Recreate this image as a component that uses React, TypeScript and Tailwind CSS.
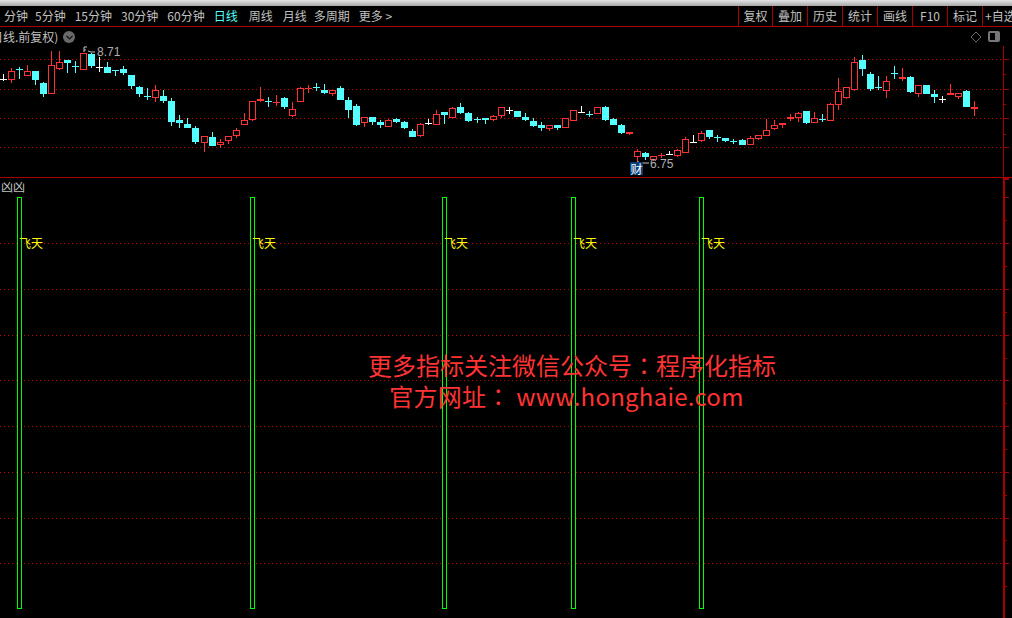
import { ChevronDown } from "lucide-react";

type Candle = [number, number, number, number, "r" | "c" | "w"];

// high, body top, body bottom, low, colour (by index, pixel y on the page)
const candles: Candle[] = [
  [75, 80, 80, 82, "w"], [69, 72, 81, 84, "r"], [68, 70, 70, 80, "c"], [66, 72, 77, 77, "r"],
  [72, 72, 81, 86, "c"], [83, 84, 95, 98, "c"], [52, 66, 95, 95, "r"], [52, 63, 70, 71, "r"],
  [61, 61, 64, 74, "c"], [62, 67, 67, 74, "c"], [54, 54, 71, 71, "r"], [54, 55, 67, 69, "c"],
  [58, 68, 68, 73, "w"], [63, 68, 74, 74, "c"], [71, 71, 71, 77, "c"], [67, 70, 74, 76, "c"],
  [76, 76, 87, 90, "c"], [87, 88, 95, 98, "c"], [89, 97, 97, 101, "c"], [86, 91, 99, 103, "r"],
  [91, 97, 102, 104, "c"], [99, 102, 123, 127, "c"], [116, 121, 124, 129, "c"], [119, 125, 129, 129, "c"],
  [127, 129, 143, 145, "c"], [137, 137, 144, 153, "r"], [133, 138, 147, 147, "c"], [140, 143, 146, 149, "r"],
  [137, 137, 142, 145, "r"], [129, 131, 137, 139, "r"], [114, 121, 126, 126, "r"], [102, 102, 121, 122, "r"],
  [88, 100, 102, 103, "r"], [98, 102, 102, 108, "c"], [96, 103, 103, 107, "r"], [98, 99, 108, 110, "c"],
  [103, 110, 117, 118, "r"], [88, 89, 103, 103, "r"], [86, 89, 89, 94, "r"], [84, 88, 88, 92, "c"],
  [85, 91, 94, 95, "c"], [91, 91, 95, 97, "r"], [87, 89, 101, 101, "c"], [98, 101, 111, 119, "c"],
  [105, 107, 126, 127, "c"], [118, 118, 124, 128, "r"], [118, 118, 123, 126, "c"], [121, 123, 126, 129, "c"],
  [120, 121, 128, 128, "r"], [119, 120, 123, 124, "c"], [122, 123, 129, 130, "c"], [130, 132, 138, 138, "c"],
  [124, 125, 137, 138, "r"], [120, 124, 124, 126, "w"], [111, 115, 126, 126, "r"], [113, 113, 116, 125, "c"],
  [108, 109, 119, 119, "r"], [104, 108, 114, 115, "c"], [113, 114, 122, 123, "c"], [118, 120, 121, 124, "c"],
  [119, 119, 121, 125, "c"], [116, 117, 121, 122, "r"], [108, 108, 117, 119, "r"], [108, 111, 111, 115, "w"],
  [112, 112, 118, 118, "c"], [114, 118, 121, 122, "c"], [119, 122, 127, 128, "c"], [123, 126, 129, 132, "c"],
  [126, 126, 130, 132, "r"], [126, 126, 129, 131, "c"], [119, 119, 129, 129, "r"], [111, 111, 122, 122, "r"],
  [107, 113, 113, 113, "w"], [112, 115, 115, 118, "c"], [108, 108, 115, 115, "r"], [107, 108, 121, 122, "c"],
  [119, 120, 126, 126, "c"], [125, 126, 134, 135, "c"], [133, 133, 135, 136, "r"], [150, 152, 158, 163, "r"],
  [153, 154, 158, 161, "c"], [157, 157, 161, 162, "r"], [154, 156, 156, 159, "r"], [152, 155, 155, 155, "w"],
  [150, 151, 157, 158, "r"], [138, 140, 154, 154, "r"], [136, 143, 143, 143, "w"], [132, 134, 142, 143, "r"],
  [131, 131, 138, 140, "c"], [136, 138, 138, 143, "c"], [139, 139, 142, 143, "c"], [140, 142, 142, 145, "c"],
  [140, 141, 146, 146, "c"], [137, 139, 146, 146, "r"], [136, 136, 140, 141, "r"], [120, 131, 137, 137, "r"],
  [121, 126, 130, 131, "r"], [124, 124, 126, 129, "r"], [115, 118, 120, 122, "r"], [113, 114, 119, 123, "r"],
  [112, 112, 124, 125, "c"], [113, 119, 124, 124, "r"], [115, 120, 120, 123, "c"], [104, 105, 122, 122, "r"],
  [79, 92, 106, 111, "r"], [88, 88, 99, 100, "r"], [58, 63, 91, 92, "r"], [56, 61, 70, 77, "c"],
  [73, 75, 90, 92, "c"], [77, 88, 88, 91, "c"], [77, 82, 92, 99, "r"], [67, 74, 74, 80, "c"],
  [69, 78, 80, 82, "r"], [77, 78, 93, 94, "c"], [86, 86, 95, 98, "r"], [86, 86, 95, 95, "c"],
  [91, 95, 98, 104, "c"], [97, 100, 100, 104, "w"], [85, 94, 96, 96, "r"], [94, 94, 98, 100, "r"],
  [91, 92, 108, 108, "c"], [102, 108, 110, 117, "r"],
];

// the terminal's bar spacing slips one pixel in three places
const candleX = (i: number) => {
  if (i < 25) return 3 + 8 * i;
  if (i < 59) return 204 + 8 * (i - 25);
  if (i < 92) return 477 + 8 * (i - 59);
  return 742 + 8 * (i - 92);
};

const colors = { r: "#ff3232", c: "#54ffff", w: "#ffffff" };

const rightTabs = ["叠加", "历史", "统计", "画线", "F10", "标记"];

const upperGrid = [60, 90, 119, 148];
const upperMinor = [75, 105, 135];
const lowerGrid = [243, 289, 335, 380, 426, 472, 518, 563];
const lowerMinor = [220, 266, 312, 358, 403, 449, 495, 540, 586];

const signals = [17, 250, 442, 571, 699];

function CandleChart() {
  return (
    <svg width="1012" height="150" viewBox="0 28 1012 150" shapeRendering="crispEdges" className="block">
      {upperGrid.map((y) => (
        <line key={y} x1="0" x2="1003" y1={y + 0.5} y2={y + 0.5} stroke="#c80000" strokeDasharray="1 3" />
      ))}
      <rect x="1003" y="47" width="1" height="131" fill="#a80000" />
      {upperGrid.map((y) => (
        <rect key={y} x="1004" y={y} width="5" height="1" fill="#a80000" />
      ))}
      {upperMinor.map((y) => (
        <rect key={y} x="1004" y={y} width="2" height="1" fill="#a80000" />
      ))}
      {candles.map(([high, top, bottom, low, c], i) => {
        const x = candleX(i);
        const color = colors[c];
        const flat = bottom - top <= 2;
        return (
          <g key={i}>
            <rect x={x} y={high} width="1" height={Math.max(low - high, 1)} fill={color} />
            {flat ? (
              <rect x={x - 3} y={top} width="7" height={Math.max(bottom - top, 1)} fill={color} />
            ) : c === "r" ? (
              <rect x={x - 3 + 0.5} y={top + 0.5} width="6" height={bottom - top - 1} fill="#000" stroke={color} />
            ) : (
              <rect x={x - 3} y={top} width="7" height={bottom - top} fill={color} />
            )}
          </g>
        );
      })}
      <path d="M84 48v5M84 48h3M84 51h2M88 52l3 1h4" stroke="#c0c0c0" fill="none" shapeRendering="auto" />
      <path d="M637 163h2M638 163v4M640 164h9" stroke="#c0c0c0" fill="none" shapeRendering="auto" />
    </svg>
  );
}

function SignalChart() {
  return (
    <svg width="1012" height="440" viewBox="0 178 1012 440" shapeRendering="crispEdges" className="block">
      {lowerGrid.map((y) => (
        <line key={y} x1="0" x2="1003" y1={y + 0.5} y2={y + 0.5} stroke="#c80000" strokeDasharray="1 3" />
      ))}
      <rect x="1003" y="178" width="2" height="440" fill="#a80000" />
      <rect x="1005" y="178" width="4" height="2" fill="#a80000" />
      {[197, ...lowerGrid].map((y) => (
        <rect key={y} x="1005" y={y} width="4" height="1" fill="#a80000" />
      ))}
      {lowerMinor.map((y) => (
        <rect key={y} x="1005" y={y} width="2" height="1" fill="#a80000" />
      ))}
      {signals.map((x) => (
        <rect key={x} x={x + 0.5} y="197.5" width="4" height="411" fill="#000" stroke="#00ff00" />
      ))}
    </svg>
  );
}

export default function App() {
  return (
    <div className="relative flex h-[618px] w-[1012px] flex-col overflow-hidden bg-black font-['Noto_Sans_CJK_SC',sans-serif] text-xs text-[#c0c0c0]">
      <div className="h-[6px] bg-gradient-to-b from-[#e4e4e4] to-[#a8a8a8]" />

      {/* Period toolbar */}
      <div className="flex h-[22px] items-center justify-between border-b border-[#a80000]">
        <div className="flex items-center pl-[4px] pt-[1px] leading-none">
          <span className="mr-[7px]">分钟</span>
          <span className="mr-[9px]">5分钟</span>
          <span className="mr-[9px]">15分钟</span>
          <span className="mr-[9px]">30分钟</span>
          <span className="mr-[9px]">60分钟</span>
          <span className="mr-[11px] text-[#54ffff]">日线</span>
          <span className="mr-[10px]">周线</span>
          <span className="mr-[7px]">月线</span>
          <span className="mr-[9px]">多周期</span>
          <span>更多 &gt;</span>
        </div>
        <div className="flex h-full w-[274px] shrink-0 overflow-hidden">
          <span className="flex w-[34px] shrink-0 items-center justify-center border-l border-[#a80000] pt-[1px]">复权</span>
          {rightTabs.map((t) => (
            <span key={t} className="flex w-[35px] shrink-0 items-center justify-center border-l border-[#a80000] pt-[1px]">
              {t}
            </span>
          ))}
          <span className="flex shrink-0 items-center whitespace-nowrap border-l border-[#a80000] pl-[2px] pt-[1px]">+自选</span>
        </div>
      </div>

      {/* Price panel */}
      <div className="relative">
        <div className="absolute left-0 right-0 top-0 flex h-[20px] items-center leading-none">
          <span className="-ml-[9px] whitespace-nowrap">日线.前复权)</span>
          <span className="ml-[5px] flex h-[12px] w-[12px] items-center justify-center rounded-full bg-[#6a6a6a]">
            <ChevronDown className="h-[11px] w-[11px] text-[#111]" strokeWidth={3} />
          </span>
          <svg width="12" height="12" viewBox="0 0 12 12" className="absolute left-[970px] top-[4px]">
            <path d="M6 1l5 5-5 5-5-5z" fill="none" stroke="#666" />
          </svg>
          <span className="absolute left-[988px] top-[4px] flex h-[11px] w-[12px] justify-end rounded-[2px] border-2 border-[#777] bg-black">
            <span className="h-full w-[3px] bg-[#777]" />
          </span>
        </div>
        <CandleChart />
        <span className="absolute left-[97px] top-[17px] font-['Liberation_Sans',sans-serif] text-xs leading-[16px] text-[#b0b0b0]">8.71</span>
        <span className="absolute left-[630px] top-[135px] flex h-[13px] w-[13px] items-center justify-center bg-[#0a3f78] leading-none text-white">
          财
        </span>
        <span className="absolute left-[650px] top-[129px] font-['Liberation_Sans',sans-serif] text-xs leading-[16px] text-[#b0b0b0]">6.75</span>
      </div>

      {/* Indicator panel */}
      <div className="relative flex-1 border-t border-[#a80000]">
        <span className="absolute left-[1px] top-[1px] leading-[16px]">凶凶</span>
        <SignalChart />
        {signals.map((x) => (
          <span key={x} className="absolute top-[57px] leading-[16px] text-[#ffff00]" style={{ left: x + 2 }}>
            飞天
          </span>
        ))}
      </div>

      {/* Watermark */}
      <div className="absolute left-[368px] top-[349px] w-[408px] text-center text-[24px] leading-[32px] text-[#ff3333]">
        <div className="whitespace-nowrap">
          更多指标关注微信公众号<span className="font-['Noto_Sans_CJK_TC',sans-serif]">：</span>程序化指标
        </div>
        <div className="-ml-[11px] -mt-[1px] whitespace-nowrap tracking-[0.25px]">
          官方网址<span className="font-['Noto_Sans_CJK_TC',sans-serif]">：</span> www.honghaie.com
        </div>
      </div>
    </div>
  );
}
